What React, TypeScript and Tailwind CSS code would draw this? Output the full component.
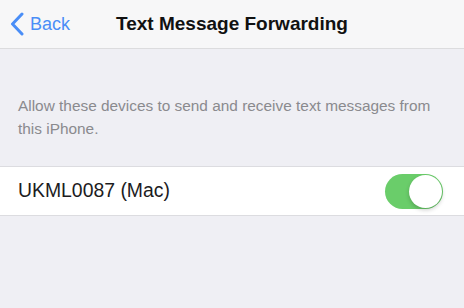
import React from "react";

export default function App() {
  return (
    <div className="w-[464px] h-[308px] bg-[#efeff4] flex flex-col" style={{ fontFamily: '"Liberation Sans", Arial, sans-serif' }}>
      <div className="h-[49px] bg-[#f7f7f8] border-b border-[#dcdcde] flex items-center relative">
        <div className="flex items-center pl-[10px]">
          <svg width="14" height="24" viewBox="0 0 14 24" fill="none">
            <path d="M12 2 L2.5 12 L12 22" stroke="#4a8ef7" strokeWidth="3" strokeLinecap="round" strokeLinejoin="round" />
          </svg>
          <span className="ml-[6px] text-[18px] text-[#4a8ef7]">Back</span>
        </div>
        <div className="absolute left-0 right-0 text-center text-[19px] font-bold text-[#111] pointer-events-none">
          Text Message Forwarding
        </div>
      </div>
      <div className="pt-[45px] pl-[18px] pr-[12px] text-[15.4px] leading-[23px] text-[#8a8a8e]">
        Allow these devices to send and receive text messages from this iPhone.
      </div>
      <div className="mt-[26px] h-[50px] bg-white border-y border-[#dcdce0] flex items-center justify-between pl-[18px] pr-[21px]">
        <span className="text-[19.4px] text-[#1c1c1e]">UKML0087 (Mac)</span>
        <div className="w-[58px] h-[35px] rounded-full bg-[#6acd6a] flex items-center justify-end pr-[1px]">
          <div className="w-[33px] h-[33px] rounded-full bg-white shadow-[0_2px_4px_rgba(0,0,0,0.2)]" />
        </div>
      </div>
    </div>
  );
}
